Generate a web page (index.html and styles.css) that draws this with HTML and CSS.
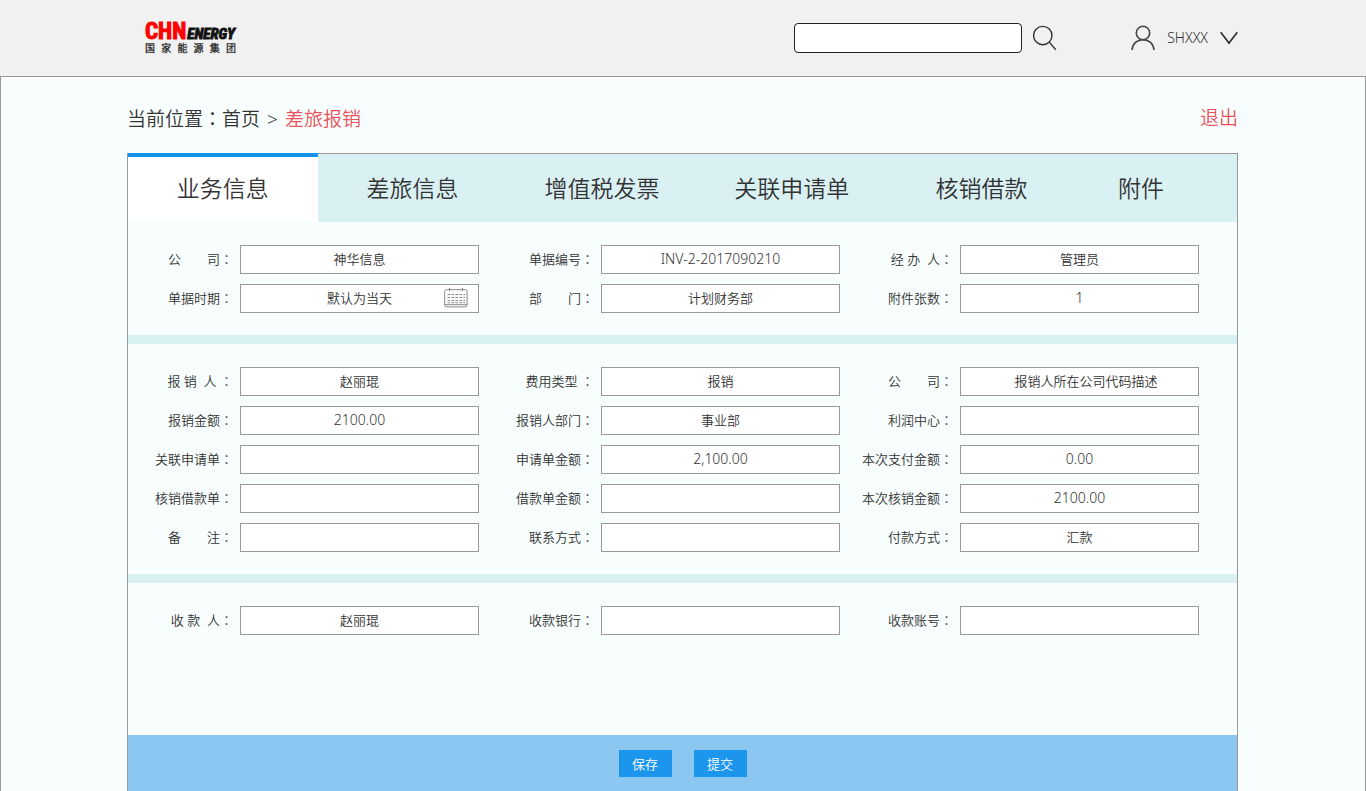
FILE: index.html
```html
<!DOCTYPE html>
<html lang="zh-CN">
<head>
<meta charset="utf-8">
<meta name="viewport" content="width=device-width, initial-scale=1">
<title>差旅报销</title>
<link rel="stylesheet" href="styles.css">
</head>
<body>
<header class="header">
  <a class="logo" href="#">
    <span class="logo-top"><span class="logo-chn">CHN</span><span class="logo-energy">ENERGY</span></span>
    <span class="logo-sub"><span>国</span><span>家</span><span>能</span><span>源</span><span>集</span><span>团</span></span>
  </a>
  <form class="search">
    <input class="search-input" type="text" aria-label="搜索">
    <button class="icon-button" type="button" aria-label="搜索">
      <svg width="24" height="26" viewBox="0 0 24 26" fill="none" stroke="#333" stroke-width="1.4"><circle cx="9.8" cy="10.6" r="9.2"/><path d="M16.3 17.1 22.7 24.7"/></svg>
    </button>
  </form>
  <button class="user" type="button">
    <svg width="24" height="26" viewBox="0 0 24 26" fill="none" stroke="#444" stroke-width="1.6"><circle cx="12" cy="8" r="6.7"/><path d="M1 25C1.500 18.500 6 14.700 12 14.700S22.500 18.500 23 25"/></svg>
    <span>SHXXX</span>
    <svg width="18" height="14" viewBox="0 0 18 14" fill="none" stroke="#333" stroke-width="1.7"><path d="M.7 1.300 9 12 17.300 1.300"/></svg>
  </button>
</header>
<main class="page">
  <div class="location">
    <nav class="crumbs">当前位置<span class="colon" lang="zh-TW">：</span><a href="#">首页</a><span class="crumb-arrow">&gt;</span><a class="accent" href="#">差旅报销</a></nav>
    <a class="accent" href="#">退出</a>
  </div>
  <form class="panel">
    <div class="tabs" role="tablist">
      <button class="tab tab-active" type="button" role="tab" aria-selected="true">业务信息</button>
      <button class="tab" type="button" role="tab">差旅信息</button>
      <button class="tab" type="button" role="tab">增值税发票</button>
      <button class="tab" type="button" role="tab">关联申请单</button>
      <button class="tab" type="button" role="tab">核销借款</button>
      <button class="tab tab-short" type="button" role="tab">附件</button>
    </div>
    <section class="fields">
      <label for="company">公　　司<span class="colon" lang="zh-TW">：</span></label><input id="company" type="text" value="神华信息">
      <label for="docno">单据编号<span class="colon" lang="zh-TW">：</span></label><input id="docno" class="number" type="text" value="INV-2-2017090210">
      <label for="handler">经 办&nbsp; 人<span class="colon" lang="zh-TW">：</span></label><input id="handler" type="text" value="管理员">
      <label for="date">单据时期<span class="colon" lang="zh-TW">：</span></label>
      <div class="date-field">
        <input id="date" type="text" value="默认为当天">
        <button class="icon-button calendar" type="button" aria-label="选择日期">
          <svg width="24" height="20" viewBox="0 0 24 20" fill="none" stroke="#888"><rect x=".7" y="1.700" width="22.400" height="17.200" rx="1.800"/><path d="M1 16.700h22M5.500 0v3M18.500 0v3"/><path stroke-dasharray="2.600 1.400" d="M3.500 6.500h17.500M3.500 9.500h17.500M3.500 12.500h17.500M3.500 14.700h17.500"/></svg>
        </button>
      </div>
      <label for="dept">部　　门<span class="colon" lang="zh-TW">：</span></label><input id="dept" type="text" value="计划财务部">
      <label for="attach">附件张数<span class="colon" lang="zh-TW">：</span></label><input id="attach" class="number" type="text" value="1">
    </section>
    <section class="fields">
      <label for="claimer">报 销&nbsp; 人 <span class="colon" lang="zh-TW">：</span></label><input id="claimer" type="text" value="赵丽琨">
      <label for="type">费用类型 <span class="colon" lang="zh-TW">：</span></label><input id="type" type="text" value="报销">
      <label for="company2">公　　司<span class="colon" lang="zh-TW">：</span></label><input id="company2" type="text" value="　报销人所在公司代码描述">
      <label for="amount">报销金额<span class="colon" lang="zh-TW">：</span></label><input id="amount" class="number" type="text" value="2100.00">
      <label for="cdept">报销人部门<span class="colon" lang="zh-TW">：</span></label><input id="cdept" type="text" value="事业部">
      <label for="profit">利润中心<span class="colon" lang="zh-TW">：</span></label><input id="profit" type="text">
      <label for="linked">关联申请单<span class="colon" lang="zh-TW">：</span></label><input id="linked" type="text">
      <label for="reqamt">申请单金额<span class="colon" lang="zh-TW">：</span></label><input id="reqamt" class="number" type="text" value="2,100.00">
      <label for="payamt">本次支付金额<span class="colon" lang="zh-TW">：</span></label><input id="payamt" class="number" type="text" value="0.00">
      <label for="loan">核销借款单<span class="colon" lang="zh-TW">：</span></label><input id="loan" type="text">
      <label for="loanamt">借款单金额<span class="colon" lang="zh-TW">：</span></label><input id="loanamt" type="text">
      <label for="offamt">本次核销金额<span class="colon" lang="zh-TW">：</span></label><input id="offamt" class="number" type="text" value="2100.00">
      <label for="remark">备　　注<span class="colon" lang="zh-TW">：</span></label><input id="remark" type="text">
      <label for="contact">联系方式<span class="colon" lang="zh-TW">：</span></label><input id="contact" type="text">
      <label for="payway">付款方式<span class="colon" lang="zh-TW">：</span></label><input id="payway" type="text" value="汇款">
    </section>
    <section class="fields fields-last">
      <label for="payee">收 款&nbsp; 人<span class="colon" lang="zh-TW">：</span></label><input id="payee" type="text" value="赵丽琨">
      <label for="bank">收款银行<span class="colon" lang="zh-TW">：</span></label><input id="bank" type="text">
      <label for="account">收款账号<span class="colon" lang="zh-TW">：</span></label><input id="account" type="text">
    </section>
    <footer class="actions">
      <button class="action" type="button">保存</button>
      <button class="action" type="button">提交</button>
    </footer>
  </form>
</main>
</body>
</html>
```
FILE: styles.css
```css
* { box-sizing: border-box; }
body {
  margin: 0;
  min-height: 100vh;
  display: flex;
  flex-direction: column;
  background: #f7fefd;
  color: #333;
  font: 350 13px/20px "Noto Sans", "Noto Sans CJK SC DemiLight", "Noto Sans CJK SC", sans-serif;
}
button, input { font: inherit; color: inherit; }
button { border: 0; padding: 0; background: none; cursor: pointer; }
a { color: inherit; text-decoration: none; }
svg { display: block; }
.colon { font-family: "Noto Sans CJK TC", sans-serif; }

.header {
  display: flex;
  align-items: center;
  height: 77px;
  padding: 0 128px;
  background: #f1f1f1;
  border-bottom: 1px solid #999;
}
.logo {
  display: flex;
  flex-direction: column;
  width: 108px;
  padding: 0 0 4px 17px;
}
.logo-top { display: flex; align-items: baseline; gap: 1px; height: 23px; }
.logo-chn {
  font: 700 23px/23px "Liberation Sans Narrow", "Roboto Condensed", "Liberation Sans", sans-serif;
  color: #f00;
  -webkit-text-stroke: 1px #f00;
}
.logo-energy {
  font: italic 700 15px/23px "Liberation Sans Narrow", "Roboto Condensed", "Liberation Sans", sans-serif;
  color: #111;
  -webkit-text-stroke: 1px #111;
}
.logo-sub {
  display: flex;
  justify-content: space-between;
  font-size: 10px;
  line-height: 10px;
  font-weight: 700;
}
.search { display: flex; align-items: center; gap: 11px; margin-left: auto; }
.search-input {
  width: 228px;
  height: 30px;
  padding: 0 8px;
  border: 1px solid #222;
  border-radius: 4px;
  background: #fff;
}
.user { display: flex; align-items: center; gap: 12px; margin-left: 74px; font-size: 14px; }

.page {
  flex: 1;
  display: flex;
  flex-direction: column;
  padding: 0 127px 0 126px;
  border: solid #999;
  border-width: 0 1px;
}
.location {
  display: flex;
  justify-content: space-between;
  padding: 26px 0 20px;
  font-size: 19px;
  line-height: 30px;
  height: 76px;
}
.crumb-arrow { margin: 0 7px; }
.accent { color: #e9515b; }

.panel {
  flex: 1;
  display: flex;
  flex-direction: column;
  border: solid #999;
  border-width: 1px 1px 0;
}
.tabs { display: flex; padding-right: 31px; background: #daf1f3; }
.tab { flex: 190 1 0; height: 68px; font-size: 23px; line-height: 32px; }
.tab-active {
  height: 69px;
  margin-top: -1px;
  padding-bottom: 4px;
  border-top: 4px solid #1893ec;
  background: #fff;
}
.tab-short { flex-grow: 130; }
.fields {
  display: grid;
  grid-template-columns: 112px 1fr 122px 1fr 120px 1fr;
  align-items: center;
  gap: 10px 0;
  padding: 23px 38px 22px 0;
  border-bottom: 9px solid #daf1f3;
}
.fields-last { flex: 1; align-content: start; border-bottom: 0; }
.fields label { padding: 0 7px 2px 0; text-align: right; white-space: nowrap; }
.fields input {
  display: block;
  width: 100%;
  height: 29px;
  padding: 0 8px 2px;
  border: 1px solid #999;
  border-radius: 0;
  background: #fff;
  text-align: center;
}
.fields .number { font-size: 14px; }
.date-field { position: relative; }
.calendar { position: absolute; top: 4px; right: 11px; }
.actions {
  display: flex;
  justify-content: center;
  gap: 22px;
  padding: 15px 0 14px;
  background: #8bc7f1;
}
.action { width: 53px; height: 27px; background: #1c95ed; color: #fff; font-weight: 400; }
```
